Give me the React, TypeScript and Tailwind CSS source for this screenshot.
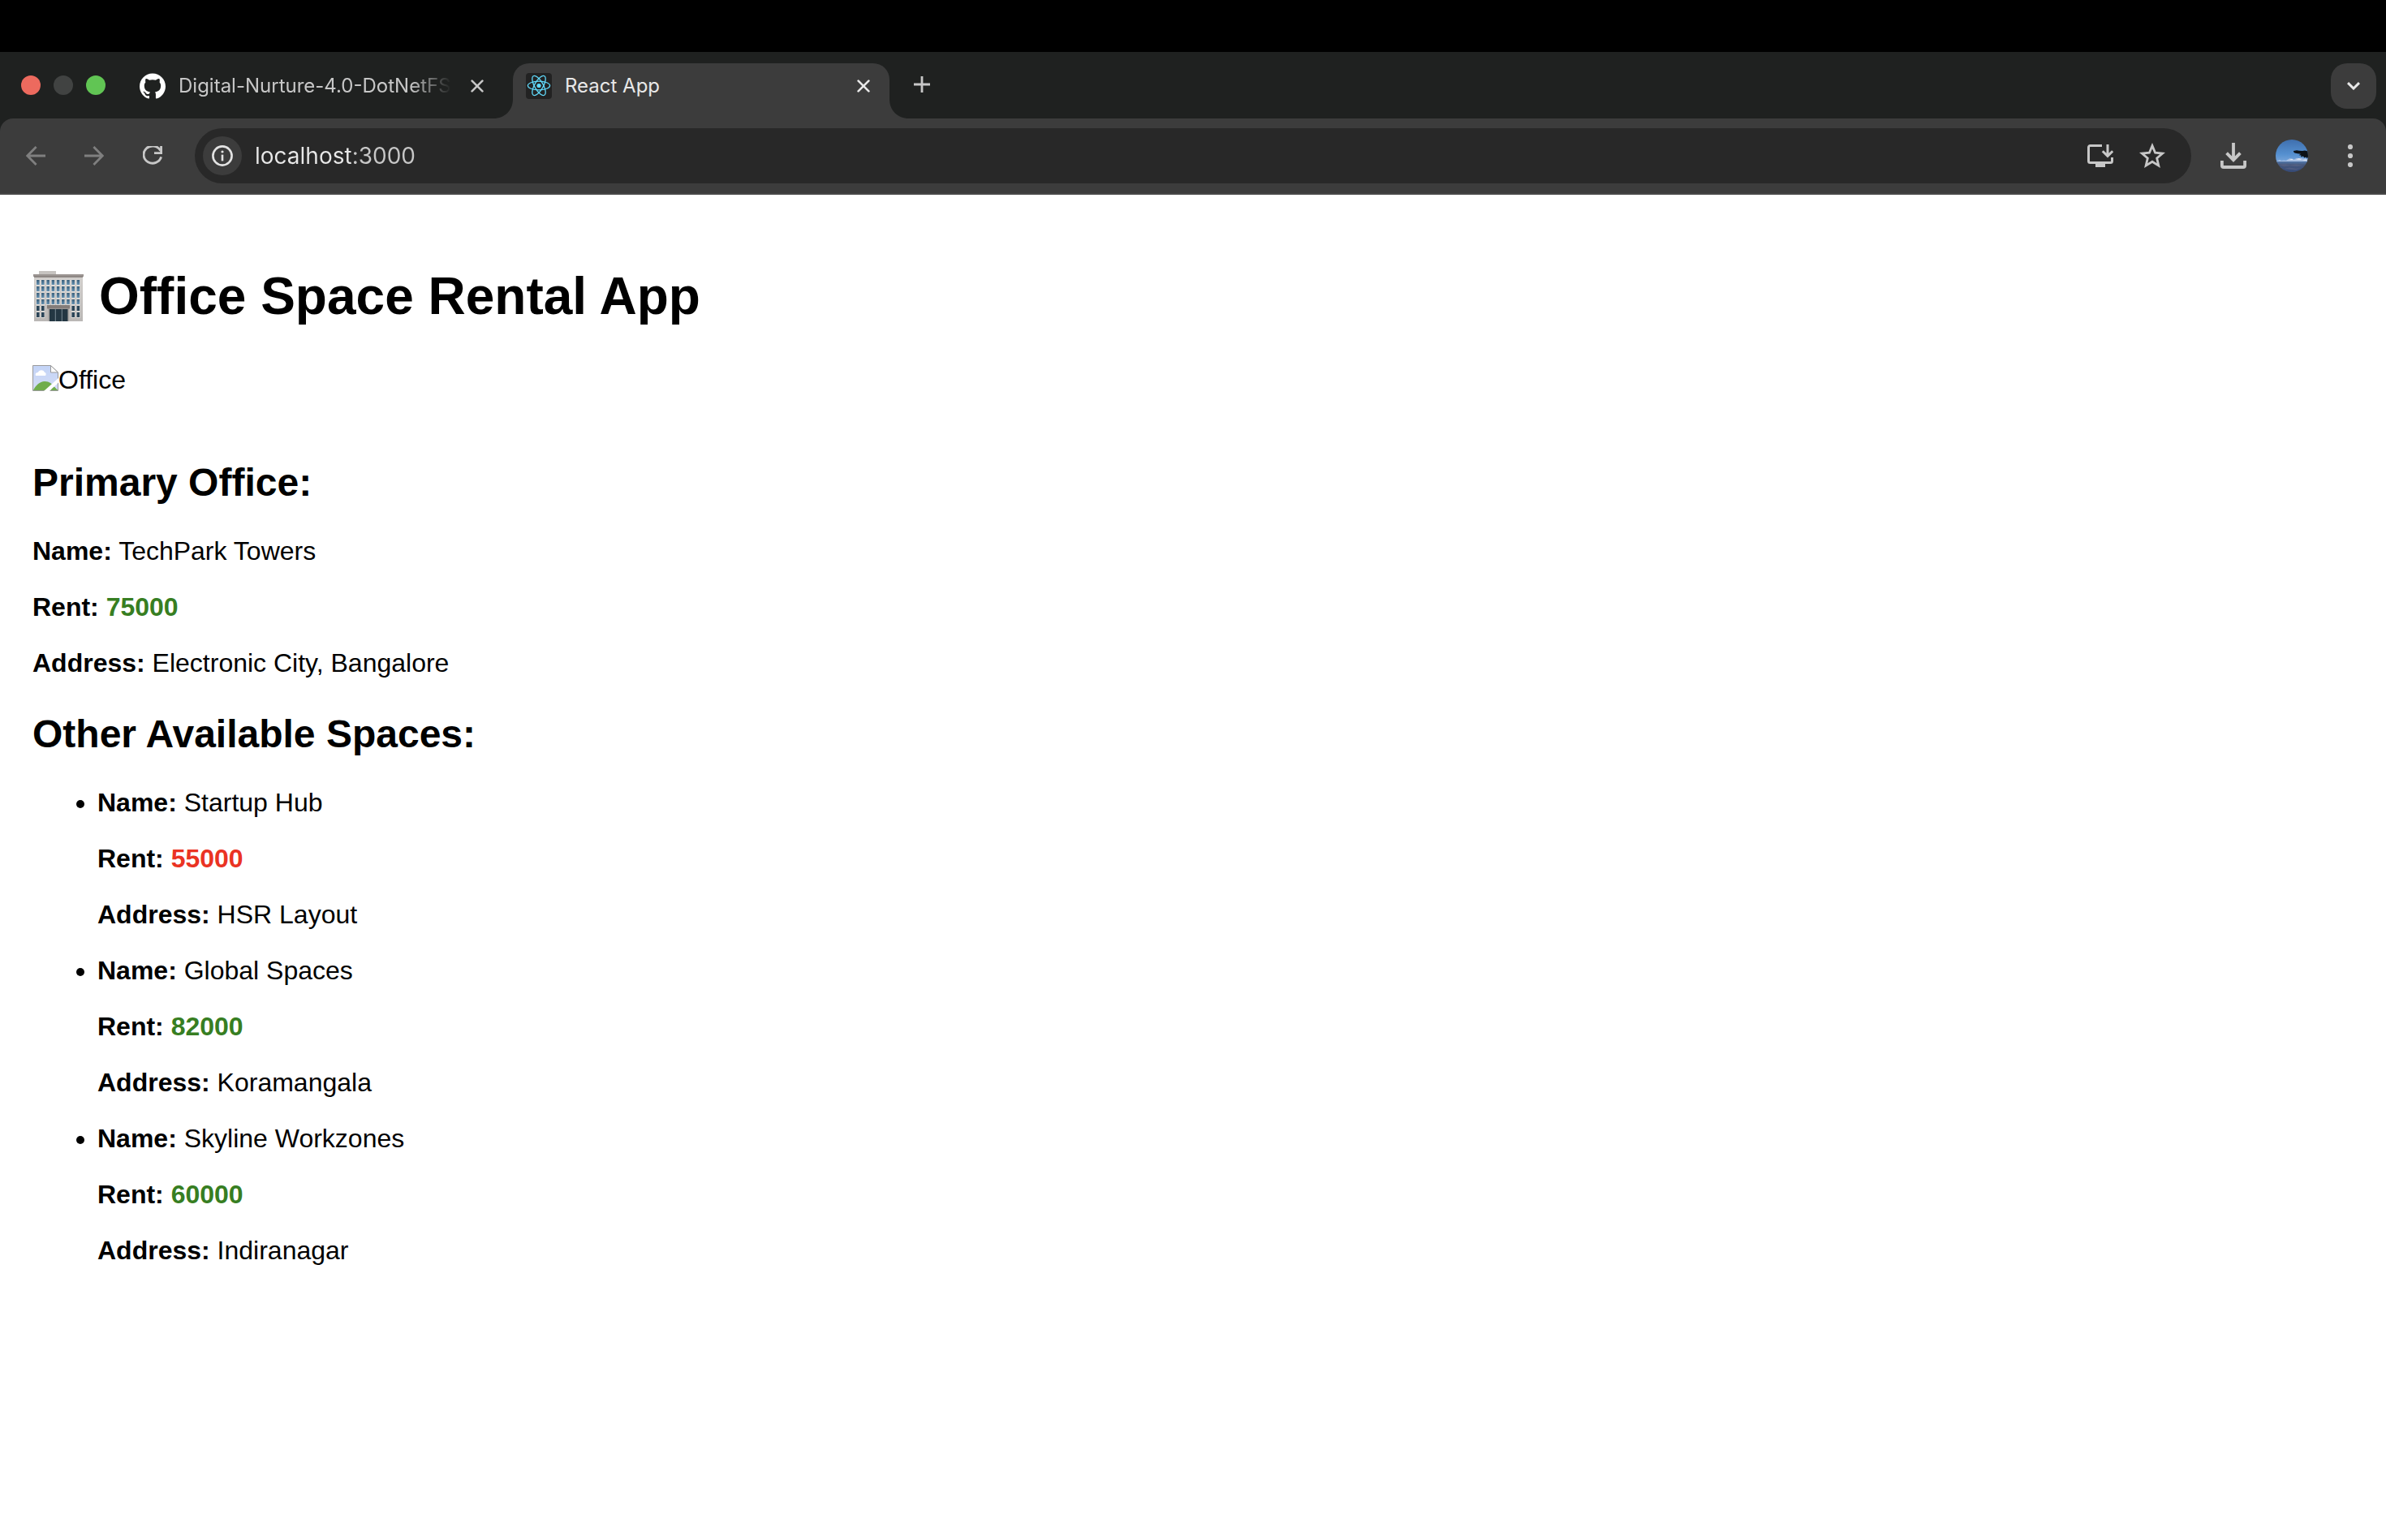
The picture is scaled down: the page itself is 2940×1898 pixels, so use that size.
import React from "react";
import { SiGithub } from "react-icons/si";

type Office = { name: string; rent: number; address: string };

const primary: Office = { name: "TechPark Towers", rent: 75000, address: "Electronic City, Bangalore" };

const others: Office[] = [
  { name: "Startup Hub", rent: 55000, address: "HSR Layout" },
  { name: "Global Spaces", rent: 82000, address: "Koramangala" },
  { name: "Skyline Workzones", rent: 60000, address: "Indiranagar" },
];

function CloseIcon() {
  return (
    <svg viewBox="0 0 16 16" className="size-4" fill="none" stroke="currentColor" strokeWidth="2.6" strokeLinecap="round">
      <path d="M1.6 1.6 14.4 14.4M14.4 1.6 1.6 14.4" />
    </svg>
  );
}

function ReactFavicon() {
  return (
    <svg viewBox="0 0 32 32" className="size-8 shrink-0" aria-hidden="true">
      <rect width="32" height="32" rx="4" fill="#222222" />
      <circle cx="16" cy="15.5" r="2.6" fill="#61dafb" />
      <g fill="none" stroke="#61dafb" strokeWidth="1.3">
        <ellipse cx="16" cy="15.5" rx="13.6" ry="5.3" />
        <ellipse cx="16" cy="15.5" rx="13.6" ry="5.3" transform="rotate(60 16 15.5)" />
        <ellipse cx="16" cy="15.5" rx="13.6" ry="5.3" transform="rotate(120 16 15.5)" />
      </g>
    </svg>
  );
}

/* Concave foot that joins the active tab to the toolbar. */
function TabFoot({ flip = false }: { flip?: boolean }) {
  return (
    <svg viewBox="0 0 24 24" className={flip ? "size-6 shrink-0 -scale-x-100" : "size-6 shrink-0"} aria-hidden="true">
      <path d="M24 0v24H0C14 24 24 14 24 0z" fill="#3c3c3c" />
    </svg>
  );
}

function TabStrip() {
  return (
    <div className="flex h-[82px] items-end bg-[#1f2120] pr-3">
      <div className="flex h-[82px] items-center gap-4 pl-[26px]">
        <button aria-label="Close window" className="size-6 rounded-full bg-[#ed6a5e]" />
        <button aria-label="Minimise window" className="size-6 rounded-full bg-[#414342]" />
        <button aria-label="Zoom window" className="size-6 rounded-full bg-[#61c554]" />
      </div>
      <div className="ml-[42px] flex h-[68px] w-[436px] items-center pb-3 text-[#c7c7c7]">
        <button className="flex min-w-0 flex-1 items-center gap-4 text-left">
          <SiGithub className="size-8 shrink-0 text-white" />
          <span className="min-w-0 flex-1 overflow-hidden whitespace-nowrap text-[24px] leading-8 mask-r-from-85%">
            Digital-Nurture-4.0-DotNetFS
          </span>
        </button>
        <button aria-label="Close tab" className="mr-3 ml-6 flex size-4 items-center justify-center">
          <CloseIcon />
        </button>
      </div>
      <TabFoot />
      <div className="flex h-[68px] w-[464px] items-center rounded-t-[20px] bg-[#3c3c3c] px-4 pb-3 text-[#e8e8e8]">
        <button className="flex flex-1 items-center gap-4 text-left">
          <ReactFavicon />
          <span className="text-[24px] leading-8">React App</span>
        </button>
        <button aria-label="Close tab" className="mr-2 flex size-4 items-center justify-center">
          <CloseIcon />
        </button>
      </div>
      <TabFoot flip />
      <button aria-label="New tab" className="mb-8 ml-1.5 text-[#c7c7c7]">
        <svg viewBox="0 0 20 20" className="size-5" fill="none" stroke="currentColor" strokeWidth="2.8">
          <path d="M10 0v20M0 10h20" />
        </svg>
      </button>
      <button
        aria-label="Search tabs"
        className="mb-3 ml-auto flex size-14 items-center justify-center rounded-[20px] bg-[#3c3c3c] text-[#e8e8e8]"
      >
        <svg viewBox="0 0 16 10" className="h-2.5 w-4" fill="none" stroke="currentColor" strokeWidth="3">
          <path d="M1 1.2 8 8l7-6.8" />
        </svg>
      </button>
    </div>
  );
}

function Avatar() {
  return (
    <svg viewBox="0 0 40 40" className="size-10" aria-hidden="true">
      <defs>
        <clipPath id="avatar-clip">
          <circle cx="20" cy="20" r="20" />
        </clipPath>
        <linearGradient id="sky" x1="0" y1="0" x2="0" y2="1">
          <stop offset="0" stopColor="#3f6fae" />
          <stop offset="0.65" stopColor="#5590d0" />
          <stop offset="1" stopColor="#7aa6da" />
        </linearGradient>
        <linearGradient id="land" x1="0" y1="0" x2="0" y2="1">
          <stop offset="0" stopColor="#5379ac" />
          <stop offset="0.3" stopColor="#46587c" />
          <stop offset="1" stopColor="#354a78" />
        </linearGradient>
      </defs>
      <g clipPath="url(#avatar-clip)">
        <rect width="40" height="28" fill="url(#sky)" />
        <path
          d="M2 26.500l3-1.500 2 1.200 3-.4 3 .2 2-1.400 3-1.600 2 1.800 3-.2 3-1.800 3 .4 2-.6 3 1 3-.4 2 .8v3H2z"
          fill="#a9c0e2"
        />
        <path d="M17 25l3-1.600 2 1.600zM25 24.500l4-1.400 3 1.800zM33 25.500l4-1 2 1.400z" fill="#e3eaf5" />
        <rect y="27" width="40" height="13" fill="url(#land)" />
        <path d="M4 31l8-1 6 1.6 7-1.4 9 1.8-8 1-9-.8-7 1zM10 36l7-1.4 8 1.2 6-.8-6 2.4z" fill="#5c6485" opacity=".6" />
        <path
          d="M22 14l4-.8 3 .6 4 .2 3-.4 4 1V22l-1.6 1-1-1.4-2 .8-1.4-1.8-3 .8.6-1.8-3-.4 2.4-1.4-4-.6-3.6-.8-1.2-1.2z"
          fill="#0c1116"
        />
      </g>
    </svg>
  );
}

function Toolbar() {
  return (
    <div className="bg-[#1f2120]">
      <div className="flex h-[94px] items-center rounded-t-2xl border-b-2 border-[#474747] bg-[#3c3c3c] pr-[34px] pl-8 text-[#c7c7c7]">
        <button aria-label="Back" className="text-[#7f7f7f]">
          <svg viewBox="0 0 24 24" className="size-6" fill="none" stroke="currentColor" strokeWidth="2.8">
            <path d="M24 12H2M12.6 1 1.8 12l10.8 11" />
          </svg>
        </button>
        <button aria-label="Forward" className="ml-12 text-[#7f7f7f]">
          <svg viewBox="0 0 24 24" className="size-6" fill="none" stroke="currentColor" strokeWidth="2.8">
            <path d="M0 12h22M11.4 1l10.8 11-10.8 11" />
          </svg>
        </button>
        <button aria-label="Reload" className="ml-12">
          <svg viewBox="0 0 24 24" className="size-6" fill="none" stroke="currentColor" strokeWidth="2.9">
            <path d="M21.6 5.4A11 10.6 0 1 0 22.6 13.4" />
            <path d="M22.6 0v8.6H14" />
          </svg>
        </button>
        <div className="ml-10 flex h-[68px] flex-1 items-center rounded-full bg-[#282828] pr-8 pl-2.5">
          <button aria-label="Site information" className="flex size-12 shrink-0 items-center justify-center rounded-full bg-[#3c3c3c] text-[#e3e3e3]">
            <svg viewBox="0 0 26 26" className="size-[26px]" fill="none" stroke="currentColor" strokeWidth="2.6">
              <circle cx="13" cy="13" r="11.6" />
              <path d="M13 11.6v7.8" />
              <circle cx="13" cy="8" r="1.6" fill="currentColor" stroke="none" />
            </svg>
          </button>
          <input
            aria-label="Address"
            defaultValue="localhost:3000"
            className="ml-4 min-w-0 flex-1 bg-[linear-gradient(to_right,#e8e8e8_118px,#c7c7c7_118px)] bg-clip-text text-[28px] leading-9 text-transparent outline-none"
          />
          <button aria-label="Install app">
            <svg viewBox="0 0 32 32" className="size-8" fill="none" stroke="currentColor" strokeWidth="3">
              <path d="M18 3.5H3.5a2 2 0 0 0-2 2v17a2 2 0 0 0 2 2h25a2 2 0 0 0 2-2V18" />
              <path d="M10 24h12v6H10z" fill="currentColor" stroke="none" />
              <path d="M25 2v14M18.8 10.2l6.2 6.2 6.2-6.2" />
            </svg>
          </button>
          <button aria-label="Bookmark this tab" className="ml-8">
            <svg viewBox="0 0 32 32" className="size-8" fill="none" stroke="currentColor" strokeWidth="2.8">
              <path d="M16 3.6l3.6 8.6 9 .8-6.9 6 2.1 9.1L16 23.2l-7.8 4.9 2.1-9.1-6.9-6 9-.8z" />
            </svg>
          </button>
        </div>
        <button aria-label="Downloads" className="ml-9">
          <svg viewBox="0 0 32 32" className="size-8" fill="none" stroke="currentColor" strokeWidth="3.8">
            <path d="M16 0v21M7.6 12.6l8.4 8.6 8.4-8.6" />
            <path d="M1.9 22v6a2 2 0 0 0 2 2h24.2a2 2 0 0 0 2-2v-6" />
          </svg>
        </button>
        <button aria-label="Profile" className="ml-9">
          <Avatar />
        </button>
        <button aria-label="Menu" className="ml-[42px]">
          <svg viewBox="0 0 20 28" className="h-7 w-5" fill="currentColor">
            <circle cx="10" cy="3" r="3.1" />
            <circle cx="10" cy="14" r="3.1" />
            <circle cx="10" cy="25" r="3.1" />
          </svg>
        </button>
      </div>
    </div>
  );
}

const windowColumns = [4, 10, 16.4, 22.6, 28.8, 35, 41.2, 47.4, 53.6];
const windowRows = [11, 19, 27, 35, 43, 51];

function OfficeBuilding() {
  return (
    <svg viewBox="0 0 62 62" className="size-[62px]" role="img" aria-label="Office building">
      <defs>
        <linearGradient id="wall" x1="0" y1="0" x2="0" y2="1">
          <stop offset="0" stopColor="#d3d0cd" />
          <stop offset="1" stopColor="#bab7b5" />
        </linearGradient>
        <linearGradient id="glass" x1="0" y1="0" x2="0" y2="1">
          <stop offset="0" stopColor="#3a5f7b" />
          <stop offset="1" stopColor="#6692b2" />
        </linearGradient>
      </defs>
      <rect x="7" y="0" width="21" height="5" fill="#c6c3c0" />
      <rect x="1" y="6" width="60" height="56" fill="url(#wall)" />
      <rect x="0" y="4" width="62" height="3" fill="#9b9592" />
      <rect x="1" y="6.6" width="60" height="1.2" fill="#7d7673" />
      {windowRows.map((y) =>
        windowColumns.map((x) =>
          y > 38 && x > 12 && x < 46 ? null : (
            <g key={`${x}-${y}`}>
              <rect x={x - 0.6} y={y - 0.4} width="4.8" height="7.2" fill="#e9e6e3" />
              <rect x={x} y={y} width="3.6" height="6" fill={y > 38 ? "#2b4558" : "url(#glass)"} />
            </g>
          )
        )
      )}
      <rect x="18" y="45" width="26" height="17" fill="#a9a6a4" />
      <rect x="17" y="42" width="28" height="4.4" fill="#847d7a" />
      <rect x="20" y="47" width="22.500" height="15" fill="#243743" />
      <path d="M27.3 47v15M35.3 47v15" stroke="#7b8b95" strokeWidth="1" />
    </svg>
  );
}

function BrokenImage() {
  return (
    <svg viewBox="0 0 32 32" className="size-8" aria-hidden="true">
      <defs>
        <linearGradient id="thumb" x1="0" y1="0" x2="0" y2="1">
          <stop offset="0" stopColor="#c3d4f7" />
          <stop offset="1" stopColor="#d3dcf5" />
        </linearGradient>
      </defs>
      <path d="M.5.5h22L31.5 9v22.500H.5z" fill="url(#thumb)" stroke="#9a9a9a" />
      <path d="M1 31c3-6 8-11 14-11s9 3 12 7l4 4z" fill="#70ad4c" />
      <path d="M4 13c-1-3 1-4 3-4 1-3 6-4 8 0 2 0 2 3 1 4z" fill="#fff" />
      <path d="M32 16v5.500L21 32h-7z" fill="#fff" />
      <path d="M22.500.5V9h9z" fill="#fff" stroke="#9a9a9a" />
      <path d="M27 27l4 4h-6l-1.500-1.500z" fill="#70ad4c" />
    </svg>
  );
}

function OfficeDetails({ office }: { office: Office }) {
  return (
    <div className="flex flex-col gap-8">
      <p>
        <strong>Name:</strong> {office.name}
      </p>
      <p>
        <strong>Rent:</strong>{" "}
        <span className={office.rent < 60000 ? "font-bold text-[#ea3323]" : "font-bold text-[#377e22]"}>{office.rent}</span>
      </p>
      <p>
        <strong>Address:</strong> {office.address}
      </p>
    </div>
  );
}

export default function App() {
  return (
    <div className="min-h-screen bg-white font-[Inter,sans-serif]">
      <div className="h-16 bg-black" />
      <header>
        <TabStrip />
        <Toolbar />
      </header>
      <main className="px-10 pt-[87px] font-['Liberation_Sans',Arial,sans-serif] text-[32px] leading-[37px] text-black">
        <h1 className="flex items-center gap-[19px] pl-px text-[64px] leading-[76px] font-bold">
          <OfficeBuilding />
          Office Space Rental App
        </h1>
        <div className="mt-[47px] flex items-start">
          <BrokenImage />
          Office
        </div>
        <section>
          <h2 className="mt-[81px] mb-[39px] text-[48px] leading-[54px] font-bold">Primary Office:</h2>
          <OfficeDetails office={primary} />
        </section>
        <section>
          <h2 className="mt-[42px] mb-[39px] text-[48px] leading-[54px] font-bold">Other Available Spaces:</h2>
          <ul className="flex list-disc flex-col gap-8 pl-20">
            {others.map((office) => (
              <li key={office.name}>
                <OfficeDetails office={office} />
              </li>
            ))}
          </ul>
        </section>
      </main>
    </div>
  );
}
